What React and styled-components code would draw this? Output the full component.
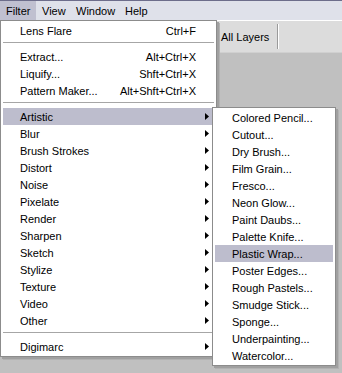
import React from "react";
import styled, { createGlobalStyle } from "styled-components";

const Global = createGlobalStyle`
  html, body { margin: 0; padding: 0; background: #c0c0c0; }
`;

const Screen = styled.div`
  position: relative;
  width: 342px;
  height: 373px;
  overflow: hidden;
  background: #c0c0c0;
  font-family: "Liberation Sans", Arial, sans-serif;
  font-size: 11px;
  color: #000;
`;

const MenuBar = styled.div`
  display: flex;
  height: 19px;
  border-top: 1px solid #6d6d8b;
  background: #dfe1ea;
`;

const MenuTitle = styled.div`
  display: flex;
  align-items: center;
  box-sizing: border-box;
  width: ${(p) => p.$w}px;
  padding-left: 6px;
  background: ${(p) => (p.$active ? "#c0c0d0" : "transparent")};
`;

const Toolbar = styled.div`
  display: flex;
  align-items: center;
  height: 31px;
  border-top: 1px solid #ffffff;
  border-bottom: 1px solid #d0d0d0;
  background: #dcdcdc;
`;

const ToolLabel = styled.span`
  margin-left: 221px;
`;

const ToolDivider = styled.div`
  width: 1px;
  height: 25px;
  margin-left: 8px;
  background: #9a9a9a;
  border-right: 1px solid #ffffff;
`;

const Menu = styled.div`
  position: absolute;
  left: ${(p) => p.$left}px;
  top: ${(p) => p.$top}px;
  width: ${(p) => p.$width}px;
  box-sizing: border-box;
  padding: 1px 2px;
  background: #ffffff;
  border: 1px solid #8c8c8c;
  box-shadow: 2px 2px 0 #a0a0a0, 3px 3px 0 #b2b2b2;
`;

const Row = styled.div`
  display: grid;
  grid-template-columns: 1fr auto 18px;
  align-items: center;
  height: 17px;
  padding-left: 17px;
  background: ${(p) => (p.$active ? "#bdbdcd" : "transparent")};
  white-space: nowrap;
`;

const Shortcut = styled.span`
  text-align: right;
`;

const ArrowBox = styled.span`
  display: flex;
  padding-left: 9px;
`;

const Separator = styled.div`
  height: 9px;
  display: flex;
  flex-direction: column;
  &::before {
    content: "";
    margin-top: 3px;
    height: 1px;
    background: #a6a6a6;
  }
`;

const Arrow = () => (
  <ArrowBox>
    <svg width="4" height="7" viewBox="0 0 4 7">
      <polygon points="0,0 4,3.5 0,7" fill="#000" />
    </svg>
  </ArrowBox>
);

const Item = ({ label, shortcut, sub, active }) => (
  <Row $active={active}>
    <span>{label}</span>
    <Shortcut>{shortcut || ""}</Shortcut>
    {sub ? <Arrow /> : <span />}
  </Row>
);

const filterGroups = [
  [{ label: "Lens Flare", shortcut: "Ctrl+F" }],
  [
    { label: "Extract...", shortcut: "Alt+Ctrl+X" },
    { label: "Liquify...", shortcut: "Shft+Ctrl+X" },
    { label: "Pattern Maker...", shortcut: "Alt+Shft+Ctrl+X" },
  ],
  [
    "Artistic",
    "Blur",
    "Brush Strokes",
    "Distort",
    "Noise",
    "Pixelate",
    "Render",
    "Sharpen",
    "Sketch",
    "Stylize",
    "Texture",
    "Video",
    "Other",
  ].map((l, i) => ({ label: l, sub: true, active: i === 0 })),
  [{ label: "Digimarc", sub: true }],
];

const artistic = [
  "Colored Pencil...",
  "Cutout...",
  "Dry Brush...",
  "Film Grain...",
  "Fresco...",
  "Neon Glow...",
  "Paint Daubs...",
  "Palette Knife...",
  "Plastic Wrap...",
  "Poster Edges...",
  "Rough Pastels...",
  "Smudge Stick...",
  "Sponge...",
  "Underpainting...",
  "Watercolor...",
];

const titles = [
  { label: "Filter", w: 36, active: true },
  { label: "View", w: 34 },
  { label: "Window", w: 49 },
  { label: "Help", w: 34 },
];

export default function App() {
  return (
    <Screen>
      <Global />
      <MenuBar>
        {titles.map((t) => (
          <MenuTitle key={t.label} $w={t.w} $active={t.active}>
            {t.label}
          </MenuTitle>
        ))}
      </MenuBar>
      <Toolbar>
        <ToolLabel>All Layers</ToolLabel>
        <ToolDivider />
      </Toolbar>

      <Menu $left={0} $top={20} $width={217}>
        {filterGroups.map((g, gi) => (
          <React.Fragment key={gi}>
            {gi > 0 && <Separator />}
            {g.map((it) => (
              <Item key={it.label} {...it} />
            ))}
          </React.Fragment>
        ))}
      </Menu>

      <Menu $left={212} $top={107} $width={124}>
        {artistic.map((l) => (
          <Item key={l} label={l} active={l === "Plastic Wrap..."} />
        ))}
      </Menu>
    </Screen>
  );
}
